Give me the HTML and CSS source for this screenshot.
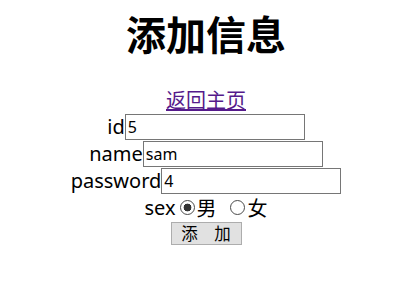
FILE: index.html
```html
<!DOCTYPE html>
<html lang="zh">
<head>
<meta charset="utf-8">
<title>添加信息</title>
<link rel="stylesheet" href="styles.css">
</head>
<body>
<h1 class="title">添加信息</h1>
<div class="row back-row"><a class="back" href="#">返回主页</a></div>
<form class="form">
  <div class="row"><span class="label">id</span><input class="field" type="text" name="id" value="5"></div>
  <div class="row"><span class="label">name</span><input class="field" type="text" name="name" value="sam"></div>
  <div class="row"><span class="label">password</span><input class="field" type="text" name="password" value="4"></div>
  <div class="row sex-row">
    <span class="label sex-label">sex</span>
    <input class="radio radio-male" type="radio" name="sex" value="男" checked>
    <span class="label">男</span>
    <input class="radio radio-female" type="radio" name="sex" value="女">
    <span class="label">女</span>
  </div>
  <div class="row btn-row"><button class="submit" type="button">添　加</button></div>
</form>
</body>
</html>
```
FILE: styles.css
```css
html, body {
  background: #fff;
}
body {
  margin: 0;
  padding: 9px 0 0 6px;
  font-family: "Noto Sans", "Noto Sans CJK SC", sans-serif;
  font-size: 20px;
  color: #000;
  text-align: center;
}
.title {
  margin: 0;
  font-size: 40px;
  line-height: 48px;
  font-weight: bold;
  font-family: "Noto Sans CJK SC", sans-serif;
}
.form {
  margin: 0;
}
.row {
  height: 27px;
  display: flex;
  justify-content: center;
  align-items: center;
}
.back-row {
  margin-top: 29px;
}
.back {
  color: #551a8b;
  text-decoration: underline;
  line-height: 27px;
  font-family: "Noto Sans CJK SC", sans-serif;
}
.label {
  line-height: 20px;
}
.field {
  box-sizing: border-box;
  width: 180px;
  height: 26px;
  margin: 0;
  padding: 0 2px;
  border: 1px solid #767676;
  border-radius: 0;
  font-family: "Noto Sans", "Noto Sans CJK SC", sans-serif;
  font-size: 16px;
  color: #000;
  background: #fff;
  outline: none;
}
.sex-label {
  margin-right: 4px;
}
.radio {
  -webkit-appearance: none;
  appearance: none;
  box-sizing: border-box;
  width: 15px;
  height: 15px;
  margin: 0;
  border: 1px solid #4a4a4a;
  border-radius: 50%;
  background: #fff;
}
.radio:checked {
  background: radial-gradient(circle, #333 0 3.6px, #fff 4.2px);
}
.radio-male {
  margin-right: 2px;
}
.radio-female {
  margin-left: 13px;
  margin-right: 3px;
}
.sex-row .label:not(.sex-label) {
  font-family: "Noto Sans CJK SC", sans-serif;
}
.btn-row {
  height: 25px;
}
.submit {
  box-sizing: border-box;
  width: 71px;
  height: 23px;
  margin: 0;
  padding: 0;
  border: 1px solid #adadad;
  border-radius: 0;
  background: #e1e1e1;
  color: #000;
  font-family: "Noto Sans CJK SC", sans-serif;
  font-size: 16.5px;
  line-height: 21px;
}
```
